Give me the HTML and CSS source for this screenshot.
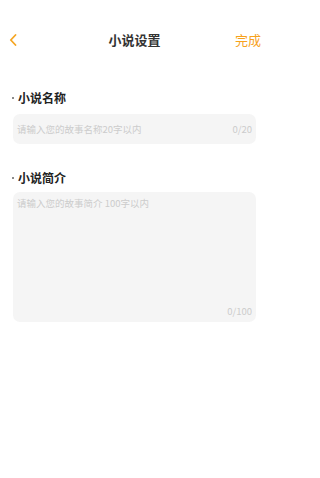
FILE: index.html
```html
<!DOCTYPE html>
<html lang="zh">
<head>
<meta charset="utf-8">
<meta name="viewport" content="width=device-width, initial-scale=1">
<link rel="stylesheet" href="styles.css">
</head>
<body>
<div class="page">
  <div class="header">
    <div class="back">
      <svg width="8" height="12" viewBox="0 0 8 12"><path d="M6.5 1 L1.8 6 L6.5 11" fill="none" stroke="#f5a623" stroke-width="1.8" stroke-linecap="round" stroke-linejoin="round"/></svg>
    </div>
    <div class="title">小说设置</div>
    <div class="done">完成</div>
  </div>
  <div class="content">
    <div class="label label-first"><span class="dot"></span>小说名称</div>
    <div class="field field-name">
      <span class="placeholder">请输入您的故事名称20字以内</span>
      <span class="count">0/20</span>
    </div>
    <div class="label label-second"><span class="dot"></span>小说简介</div>
    <div class="field field-intro">
      <span class="placeholder">请输入您的故事简介 100字以内</span>
      <span class="count count-bottom">0/100</span>
    </div>
  </div>
</div>
</body>
</html>
```
FILE: styles.css
```css
html, body {
  margin: 0;
  padding: 0;
  background: #ffffff;
  font-family: "Noto Sans CJK SC", "Noto Sans", sans-serif;
}
.page {
  max-width: 269px;
}
.header {
  margin-top: 28px;
  height: 24px;
  display: grid;
  grid-template-columns: 1fr auto 1fr;
  align-items: center;
  padding: 0 8px 0 8px;
}
.back {
  display: flex;
  align-items: center;
  padding-left: 1px;
}
.back svg { display: block; }
.title {
  font-size: 13px;
  font-weight: 700;
  color: #333333;
  line-height: 24px;
}
.done {
  justify-self: end;
  font-size: 13px;
  color: #f7a21b;
  line-height: 24px;
}
.content {
  padding: 0 13px;
}
.label {
  display: flex;
  align-items: center;
  font-size: 12px;
  font-weight: 700;
  color: #222222;
  line-height: 16px;
  margin-left: -1px;
}
.label-first { margin-top: 38px; }
.label-second { margin-top: 26px; }
.dot {
  width: 2px;
  height: 2px;
  border-radius: 50%;
  background: #666666;
  margin-right: 4px;
}
.field {
  background: #f5f5f5;
  border-radius: 7px;
  box-sizing: border-box;
  display: flex;
  color: #cccccc;
  font-size: 9.5px;
}
.field-name {
  margin-top: 8px;
  height: 30px;
  align-items: center;
  justify-content: space-between;
  padding: 0 4px 0 4px;
}
.field-intro {
  margin-top: 6px;
  height: 130px;
  flex-direction: column;
  justify-content: space-between;
  padding: 4px 4px 4px 4px;
}
.count-bottom {
  align-self: flex-end;
}
```
